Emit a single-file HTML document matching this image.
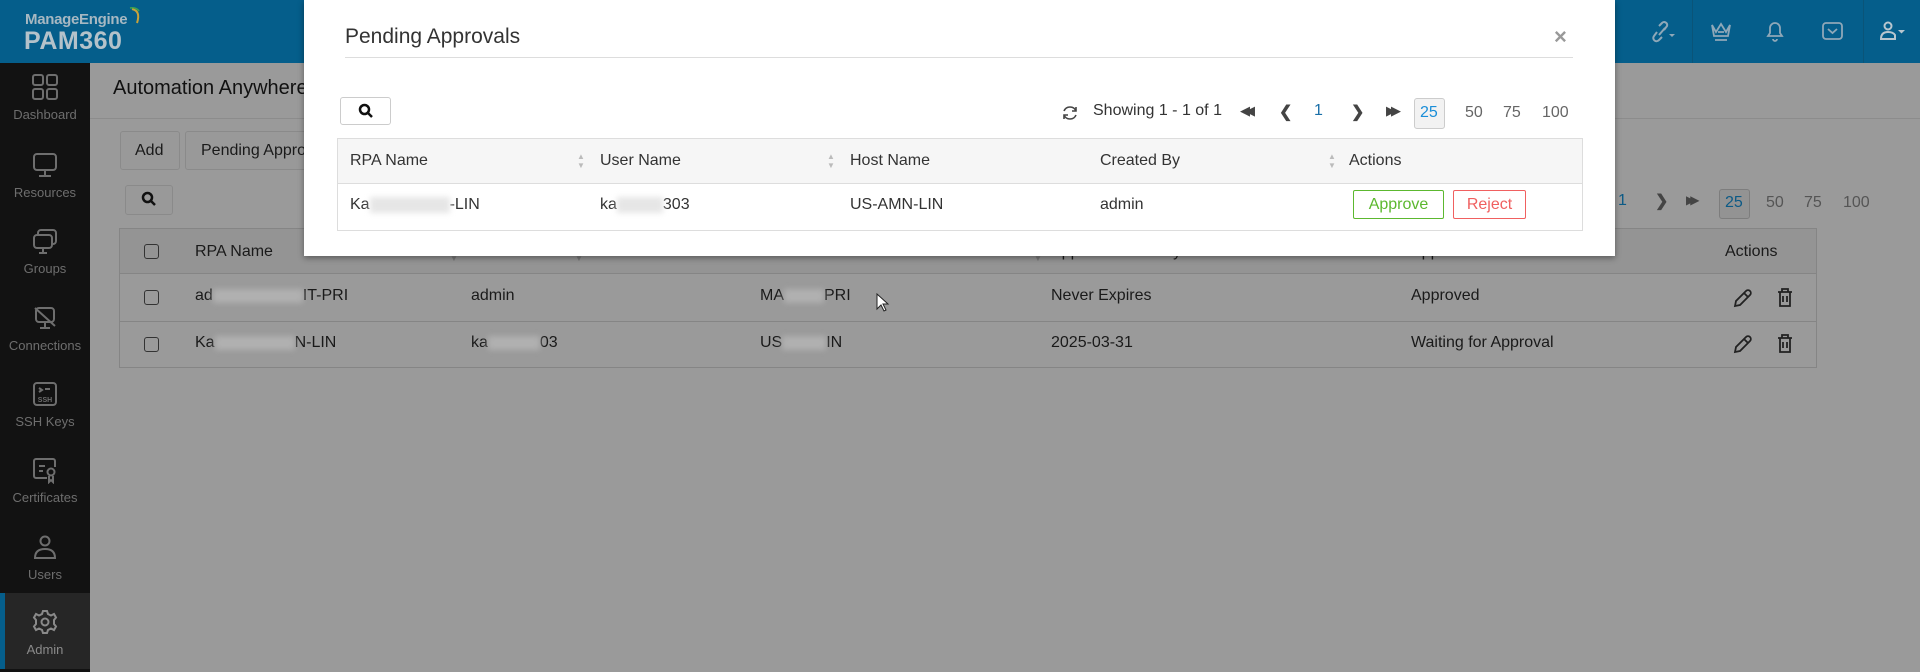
<!DOCTYPE html>
<html><head><meta charset="utf-8"><style>
*{box-sizing:border-box;margin:0;padding:0}
body{width:1920px;height:672px;overflow:hidden;background:#9a9a9a;font-family:"Liberation Sans",sans-serif;position:relative;color:#1a1a1a}
.a{position:absolute}
.hdr{left:0;top:0;width:1920px;height:63px;background:#055e8b}
.side{left:0;top:63px;width:90px;height:609px;background:#121212}
.si{position:absolute;left:0;width:90px;text-align:center;color:#6e6e6e;font-size:13px}
.si svg{display:block;margin:0 auto 6px}
.blur{display:inline-block;background:#b0b0b0;filter:blur(3px);height:14px;vertical-align:middle}
.mblur{display:inline-block;background:#e6e6e6;filter:blur(3px);height:16px;vertical-align:middle}
.t{font-size:16px;position:absolute}
.btn{position:absolute;border:1px solid #8a8a8a;border-radius:3px;background:#999}
.modal{left:304px;top:0;width:1311px;height:256px;background:#fff;box-shadow:0 2px 6px rgba(0,0,0,.4)}
.modal .t{color:#333}
.srt{position:absolute;font-size:8px;color:#777;line-height:9px}
</style></head><body>
<div class="a hdr">
 <div class="a" style="left:25px;top:11px;color:#a7b8c2;font-size:15px;font-weight:bold;letter-spacing:-.3px">ManageEngine</div>
 <svg class="a" style="left:128px;top:6px" width="16" height="20"><path d="M4 3 Q13 5 9 17" stroke="#c9a23a" stroke-width="2" fill="none"/><path d="M2 2 Q8 1 11 5" stroke="#3fa34d" stroke-width="1.5" fill="none"/></svg>
 <div class="a" style="left:24px;top:27px;color:#b4c2ca;font-size:25px;font-weight:bold;letter-spacing:.5px">PAM360</div>
 <div class="a" style="left:1692px;top:0;width:1px;height:63px;background:#0a5478"></div>
 <div class="a" style="left:1863px;top:0;width:1px;height:63px;background:#0a5478"></div>
 <svg class="a" style="left:1650px;top:20px" width="28" height="24" fill="none" stroke="#8fa8b8" stroke-width="2"><path d="M9 15 L15 8 M7 12 L4 16 A3 3 0 0 0 9 20 L12 17 M14 10 L17 6 A3 3 0 0 0 12 3 L9 6"/><path d="M19 14 h6 l-3 3z" fill="#8fa8b8" stroke="none"/></svg>
 <svg class="a" style="left:1709px;top:20px" width="24" height="24" fill="none" stroke="#8fa8b8" stroke-width="1.8"><path d="M3 5 L7 12 L12 4 L17 12 L21 5 L19 16 H5 Z M6 20 H18 M9 12 H15"/></svg>
 <svg class="a" style="left:1764px;top:19px" width="22" height="24" fill="none" stroke="#8fa8b8" stroke-width="1.8"><path d="M4 17 H18 L16 14 V9 A5 5 0 0 0 6 9 V14 Z M9 20 A2 2 0 0 0 13 20"/></svg>
 <svg class="a" style="left:1821px;top:20px" width="24" height="22" fill="none" stroke="#8fa8b8" stroke-width="1.8"><rect x="2" y="3" width="19" height="16" rx="3"/><path d="M7 9 L11.5 13 L16 9"/></svg>
 <svg class="a" style="left:1879px;top:20px" width="30" height="24" fill="none" stroke="#b8c6cf" stroke-width="2"><circle cx="9" cy="6" r="3.5"/><path d="M2 19 Q2 12 9 12 Q14 12 16 15 V19 Z"/><path d="M19 10 h7 l-3.5 3.5z" fill="#b8c6cf" stroke="none"/></svg>
</div>
<div class="a side">
 <div class="si" style="top:10px"><svg width="28" height="28" fill="none" stroke="#6e6e6e" stroke-width="2"><rect x="2" y="2" width="10" height="10" rx="2"/><rect x="16" y="2" width="10" height="10" rx="2"/><rect x="2" y="16" width="10" height="10" rx="2"/><rect x="16" y="16" width="10" height="10" rx="2"/></svg>Dashboard</div>
 <div class="si" style="top:88px"><svg width="28" height="28" fill="none" stroke="#6e6e6e" stroke-width="2"><rect x="3" y="3" width="22" height="16" rx="3"/><path d="M14 19 V25 M8 25 H20"/></svg>Resources</div>
 <div class="si" style="top:164px"><svg width="28" height="28" fill="none" stroke="#6e6e6e" stroke-width="2"><rect x="7" y="3" width="18" height="14" rx="3"/><rect x="3" y="8" width="18" height="13" rx="3" fill="#121212"/><path d="M12 21 V26 M8 26 H16"/></svg>Groups</div>
 <div class="si" style="top:241px"><svg width="28" height="28" fill="none" stroke="#6e6e6e" stroke-width="2"><rect x="5" y="4" width="18" height="14" rx="3"/><path d="M4 4 L24 22 M14 18 V24 M9 24 H19"/></svg>Connections</div>
 <div class="si" style="top:317px"><svg width="28" height="28" fill="none" stroke="#6e6e6e" stroke-width="2"><rect x="3" y="3" width="22" height="22" rx="3"/><path d="M8 8 L11 10 L8 12 M14 9 H19"/><text x="14" y="22" font-size="7" font-weight="bold" text-anchor="middle" fill="#6e6e6e" stroke="none" font-family="Liberation Sans">SSH</text></svg>SSH Keys</div>
 <div class="si" style="top:393px"><svg width="28" height="28" fill="none" stroke="#6e6e6e" stroke-width="2"><path d="M16 22 H5 A2 2 0 0 1 3 20 V5 A2 2 0 0 1 5 3 H22 A2 2 0 0 1 24 5 V11"/><path d="M8 10 H14 M8 15 H12"/><circle cx="20" cy="16" r="3.5"/><path d="M18 20 V26 L20 24 L22 26 V20"/></svg>Certificates</div>
 <div class="si" style="top:470px"><svg width="28" height="28" fill="none" stroke="#6e6e6e" stroke-width="2"><circle cx="14" cy="8" r="4.5"/><path d="M4 25 Q4 16 14 16 Q24 16 24 25 Z"/></svg>Users</div>
 <div class="a" style="left:0;top:530px;width:90px;height:76px;background:#262626;border-left:5px solid #055e8b"></div>
 <div class="si" style="top:545px;color:#8a8a8a"><svg width="28" height="28" fill="none" stroke="#8a8a8a" stroke-width="2"><path d="M12 3 H16 L17 6 L20 7.5 L23 6 L25 9.5 L23 12 V16 L25 18.5 L23 22 L20 20.5 L17 22 L16 25 H12 L11 22 L8 20.5 L5 22 L3 18.5 L5 16 V12 L3 9.5 L5 6 L8 7.5 L11 6 Z"/><circle cx="14" cy="14" r="3.5"/></svg>Admin</div>
</div>
<!-- background content -->
<div class="a" style="left:90px;top:63px;width:1830px;height:56px;border-bottom:1px solid #8c8c8c"></div>
<div class="a" style="left:113px;top:77px;font-size:20px;color:#111">Automation Anywhere</div>
<div class="btn" style="left:120px;top:131px;width:60px;height:39px"></div><div class="t" style="left:135px;top:142px">Add</div>
<div class="btn" style="left:185px;top:131px;width:140px;height:39px"></div><div class="t" style="left:201px;top:142px">Pending Approvals</div>
<div class="btn" style="left:125px;top:185px;width:48px;height:30px"></div>
<svg class="a" style="left:141px;top:191px" width="16" height="16" fill="none" stroke="#111" stroke-width="2.5"><circle cx="6.5" cy="6.5" r="4.5"/><path d="M10 10 L14 14"/></svg>
<div class="t" style="left:1618px;top:192px;color:#0c5a86">1</div>
<div class="t" style="left:1655px;top:191px;color:#444;font-weight:bold">&#x276F;</div>
<div class="t" style="left:1686px;top:193px;color:#444;font-size:12px;letter-spacing:-5px">▶▶</div>
<div class="a" style="left:1719px;top:189px;width:31px;height:30px;border:1px solid #7d7d7d;border-radius:3px;background:#939393"></div>
<div class="t" style="left:1725px;top:194px;color:#0c5a86">25</div>
<div class="t" style="left:1766px;top:194px;color:#555">50</div>
<div class="t" style="left:1804px;top:194px;color:#555">75</div>
<div class="t" style="left:1843px;top:194px;color:#555">100</div>
<div class="a" style="left:119px;top:228px;width:1698px;height:140px;border:1px solid #858585"></div>
<div class="a" style="left:120px;top:229px;width:1696px;height:45px;background:#949494;border-bottom:1px solid #858585"></div>
<div class="a" style="left:120px;top:321px;width:1696px;height:1px;background:#858585"></div>
<div class="a" style="left:144px;top:244px;width:15px;height:15px;border:1.5px solid #333;border-radius:3px"></div>
<div class="a" style="left:144px;top:290px;width:15px;height:15px;border:1.5px solid #333;border-radius:3px"></div>
<div class="a" style="left:144px;top:337px;width:15px;height:15px;border:1.5px solid #333;border-radius:3px"></div>
<div class="t" style="left:195px;top:243px">RPA Name</div>
<div class="srt" style="left:450px;top:245px">▲<br>▼</div>
<div class="t" style="left:471px;top:243px">User Name</div>
<div class="srt" style="left:575px;top:245px">▲<br>▼</div>
<div class="t" style="left:760px;top:243px">Host Name</div>
<div class="srt" style="left:1034px;top:245px">▲<br>▼</div>
<div class="t" style="left:1051px;top:243px">App Token Validity</div>
<div class="t" style="left:1411px;top:243px">Approval Status</div>
<div class="t" style="left:1725px;top:243px">Actions</div>
<div class="t" style="left:195px;top:287px">ad<span class="blur" style="width:90px"></span>IT-PRI</div>
<div class="t" style="left:471px;top:287px">admin</div>
<div class="t" style="left:760px;top:287px">MA<span class="blur" style="width:40px"></span>PRI</div>
<div class="t" style="left:1051px;top:287px">Never Expires</div>
<div class="t" style="left:1411px;top:287px">Approved</div>
<div class="t" style="left:195px;top:334px">Ka<span class="blur" style="width:80px"></span>N-LIN</div>
<div class="t" style="left:471px;top:334px">ka<span class="blur" style="width:52px"></span>03</div>
<div class="t" style="left:760px;top:334px">US<span class="blur" style="width:44px"></span>IN</div>
<div class="t" style="left:1051px;top:334px">2025-03-31</div>
<div class="t" style="left:1411px;top:334px">Waiting for Approval</div>
<svg class="a" style="left:1732px;top:287px" width="22" height="22" fill="none" stroke="#222" stroke-width="1.8"><path d="M3 19 L4 14 L14 4 A2.5 2.5 0 0 1 18 8 L8 18 Z M12 6 L16 10"/></svg>
<svg class="a" style="left:1776px;top:287px" width="18" height="22" fill="none" stroke="#222" stroke-width="1.8"><path d="M2 5 H16 M6 5 V2 H12 V5 M4 5 V19 H14 V5 M7 9 V15 M11 9 V15"/></svg>
<svg class="a" style="left:1732px;top:333px" width="22" height="22" fill="none" stroke="#222" stroke-width="1.8"><path d="M3 19 L4 14 L14 4 A2.5 2.5 0 0 1 18 8 L8 18 Z M12 6 L16 10"/></svg>
<svg class="a" style="left:1776px;top:333px" width="18" height="22" fill="none" stroke="#222" stroke-width="1.8"><path d="M2 5 H16 M6 5 V2 H12 V5 M4 5 V19 H14 V5 M7 9 V15 M11 9 V15"/></svg>
<!-- modal -->
<div class="a modal">
 <div class="a" style="left:41px;top:25px;font-size:21px;color:#333">Pending Approvals</div>
 <div class="a" style="left:41px;top:57px;width:1228px;height:1px;background:#ddd"></div>
 <div class="a" style="left:1250px;top:24px;font-size:22px;color:#999;font-weight:bold">×</div>
 <div class="a" style="left:36px;top:97px;width:51px;height:28px;border:1px solid #ccc;border-radius:3px"></div>
 <svg class="a" style="left:54px;top:103px" width="16" height="16" fill="none" stroke="#111" stroke-width="2.5"><circle cx="6.5" cy="6.5" r="4.5"/><path d="M10 10 L14 14"/></svg>
 <svg class="a" style="left:757px;top:104px" width="18" height="18" fill="none" stroke="#444" stroke-width="1.6"><path d="M15 7 A6.5 6.5 0 0 0 3 7 M3 11 A6.5 6.5 0 0 0 15 11 M15 3 V7 H11 M3 15 V11 H7"/></svg>
 <div class="t" style="left:789px;top:102px">Showing 1 - 1 of 1</div>
 <div class="t" style="left:936px;top:103px;color:#444;font-size:13px;letter-spacing:-5px">◀◀</div>
 <div class="t" style="left:975px;top:102px;color:#444;font-weight:bold">&#x276E;</div>
 <div class="t" style="left:1010px;top:102px;color:#1a6fa8">1</div>
 <div class="t" style="left:1047px;top:102px;color:#444;font-weight:bold">&#x276F;</div>
 <div class="t" style="left:1082px;top:103px;color:#444;font-size:13px;letter-spacing:-5px">▶▶</div>
 <div class="a" style="left:1110px;top:98px;width:31px;height:31px;border:1px solid #ccc;border-radius:3px;background:#f2f2f2"></div>
 <div class="t" style="left:1116px;top:104px;color:#1a8ed8">25</div>
 <div class="t" style="left:1161px;top:104px;color:#666">50</div>
 <div class="t" style="left:1199px;top:104px;color:#666">75</div>
 <div class="t" style="left:1238px;top:104px;color:#666">100</div>
 <div class="a" style="left:33px;top:138px;width:1246px;height:93px;border:1px solid #ddd"></div>
 <div class="a" style="left:34px;top:139px;width:1244px;height:45px;background:#f6f6f6;border-bottom:1px solid #ddd"></div>
 <div class="t" style="left:46px;top:152px">RPA Name</div>
 <div class="t" style="left:296px;top:152px">User Name</div>
 <div class="t" style="left:546px;top:152px">Host Name</div>
 <div class="t" style="left:796px;top:152px">Created By</div>
 <div class="t" style="left:1045px;top:152px">Actions</div>
 <div class="a" style="left:273px;top:152px;font-size:8px;color:#bbb;line-height:9px">▲<br>▼</div>
 <div class="a" style="left:523px;top:152px;font-size:8px;color:#bbb;line-height:9px">▲<br>▼</div>
 <div class="a" style="left:1024px;top:152px;font-size:8px;color:#bbb;line-height:9px">▲<br>▼</div>
 <div class="t" style="left:46px;top:196px">Ka<span class="mblur" style="width:80px"></span>-LIN</div>
 <div class="t" style="left:296px;top:196px">ka<span class="mblur" style="width:46px"></span>303</div>
 <div class="t" style="left:546px;top:196px">US-AMN-LIN</div>
 <div class="t" style="left:796px;top:196px">admin</div>
 <div class="a" style="left:1049px;top:190px;width:91px;height:29px;border:1px solid #5cb82f;border-radius:2px;color:#5cb82f;font-size:16px;text-align:center;line-height:27px">Approve</div>
 <div class="a" style="left:1149px;top:190px;width:73px;height:29px;border:1px solid #f06060;border-radius:2px;color:#f06060;font-size:16px;text-align:center;line-height:27px">Reject</div>
</div>
<svg class="a" style="left:876px;top:293px" width="14" height="20"><path d="M1 1 V16 L5 12 L8 18 L10 17 L7 11 H12 Z" fill="#fff" stroke="#222" stroke-width="1"/></svg>
</body></html>
